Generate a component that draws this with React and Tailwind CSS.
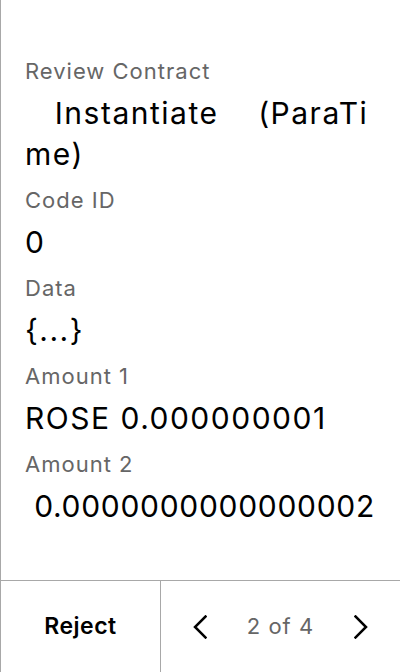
const rows = [
  { label: 'Code ID', value: '0' },
  { label: 'Data', value: '{...}' },
  { label: 'Amount 1', value: 'ROSE 0.000000001' },
  { label: 'Amount 2', value: ' 0.0000000000000002', tight: true },
];

function Field({ label, value, tight }) {
  return (
    <div className="mb-[11px]">
      <div className="text-[22px] leading-[28px] tracking-[1px] text-[#666666] mb-2">{label}</div>
      <div
        className={
          'text-[30px] leading-[41px] text-black whitespace-pre-wrap break-all ' +
          (tight ? 'tracking-[0.7px]' : 'tracking-[1.5px]')
        }
      >
        {value}
      </div>
    </div>
  );
}

export default function App() {
  return (
    <div
      className="h-[672px] w-[400px] flex flex-col bg-white border-l border-[#a8a8a8]"
      style={{ fontFamily: 'Inter, "Noto Sans", sans-serif' }}
    >
      <div className="flex-1 pl-6 pr-[21px] pt-[57px]">
        <Field label="Review Contract" value={'   Instantiate    (ParaTime)'} />
        {rows.map((r) => (
          <Field key={r.label} label={r.label} value={r.value} tight={r.tight} />
        ))}
      </div>

      <div className="h-[92px] flex border-t border-[#a8a8a8]">
        <button className="w-[160px] border-r border-[#a8a8a8] flex items-center justify-center text-[23px] font-semibold tracking-[0.5px] text-black">
          Reject
        </button>
        <div className="flex-1 flex items-center justify-between px-8">
          <svg width="14" height="24" viewBox="0 0 14 24" fill="none" stroke="black" strokeWidth="2.5" strokeLinecap="square">
            <path d="M12.5 1.5 L2 12 L12.5 22.5" />
          </svg>
          <span className="text-[22px] tracking-[1px] text-[#666666]">2 of 4</span>
          <svg width="14" height="24" viewBox="0 0 14 24" fill="none" stroke="black" strokeWidth="2.5" strokeLinecap="square">
            <path d="M1.5 1.5 L12 12 L1.5 22.5" />
          </svg>
        </div>
      </div>
    </div>
  );
}
